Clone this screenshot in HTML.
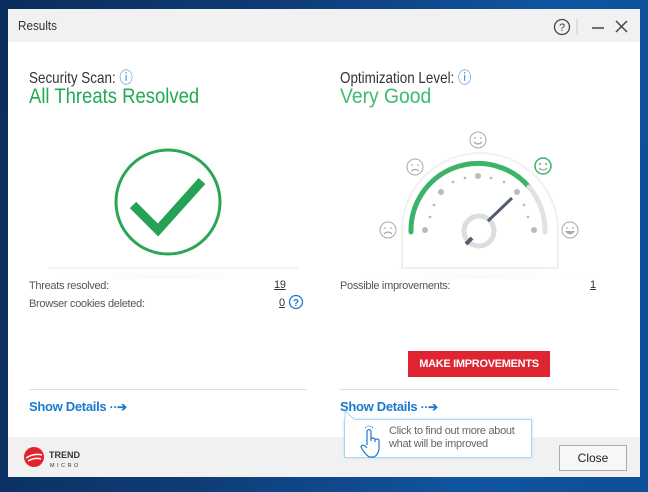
<!DOCTYPE html>
<html><head><meta charset="utf-8"><style>
body{margin:0;width:648px;height:492px;overflow:hidden;position:relative;font-family:"Liberation Sans",sans-serif;background:linear-gradient(100deg,#0b2d5c 0%,#0f3d78 40%,#1055a0 75%,#0d4f98 100%);}
.win{position:absolute;left:8px;top:9px;width:632px;height:468px;background:#fff;}
.title{position:absolute;left:0;top:0;width:632px;height:33px;background:#f1f1f1;}
.t{position:absolute;font-size:13px;color:#333;white-space:nowrap;transform-origin:0 0;}
.abs{position:absolute;}
.lbl{position:absolute;font-size:11px;color:#555;letter-spacing:-0.3px;}
.sep{position:absolute;height:1px;background:#ddd;}
.sd{position:absolute;font-size:13px;color:#1a7ad0;font-weight:bold;letter-spacing:-0.3px;}
.footer{position:absolute;left:0;top:428px;width:632px;height:40px;background:#f1f1f1;}
</style></head><body>
<div class="win">
<div class="title"></div>
<div class="t" style="left:10px;top:9px;font-size:13px;transform:scaleX(0.9)">Results</div>
<svg class="abs" style="left:545px;top:8px" width="85" height="20">
<circle cx="9" cy="10" r="7.5" fill="none" stroke="#444" stroke-width="1.3"/>
<text x="9" y="14" font-size="11" text-anchor="middle" fill="#444" font-family="Liberation Sans">?</text>
<line x1="24" y1="2" x2="24" y2="18" stroke="#ccc"/>
<line x1="39" y1="11" x2="51" y2="11" stroke="#444" stroke-width="1.5"/>
<path d="M63 4 L74 15 M74 4 L63 15" stroke="#444" stroke-width="1.5"/>
</svg>
<div class="t" style="left:21px;top:55px;font-size:16px;color:#333;transform:scaleX(0.84)">Security Scan: <span style="color:#1a7ad0">ⓘ</span></div>
<div class="t" style="left:21px;top:76px;font-size:21px;color:#22a954;transform:scaleX(0.88)">All Threats Resolved</div>
<div class="t" style="left:332px;top:55px;font-size:16px;color:#333;transform:scaleX(0.84)">Optimization Level: <span style="color:#1a7ad0">ⓘ</span></div>
<div class="t" style="left:332px;top:76px;font-size:21px;color:#3dbb6f;transform:scaleX(0.92)">Very Good</div>
<svg class="abs" style="left:0;top:100px" width="632" height="170">
<defs><radialGradient id="sh" cx="50%" cy="100%" r="60%"><stop offset="0" stop-color="#e4e4e4"/><stop offset="1" stop-color="#fff" stop-opacity="0"/></radialGradient></defs>
<ellipse cx="160" cy="159" rx="125" ry="28" fill="url(#sh)"/>
<line x1="40" y1="159" x2="290" y2="159" stroke="#e8e8e8"/>
<circle cx="160" cy="93" r="52" fill="none" stroke="#2aa654" stroke-width="3"/>
<path d="M125 96 L150 121 L194 72" fill="none" stroke="#26a257" stroke-width="9"/>
<ellipse cx="470" cy="159" rx="135" ry="30" fill="url(#sh)"/>
<path d="M394 159 L394 122 A78 78 0 0 1 550 122 L550 159 Z" fill="#fff" stroke="#f0f0f0" stroke-width="2"/>
<path d="M403 123 A67 67 0 0 1 521 78" fill="none" stroke="#3bb46a" stroke-width="5" stroke-linecap="round"/>
<path d="M521 78 A67 67 0 0 1 537 123" fill="none" stroke="#e2e2e2" stroke-width="5" stroke-linecap="round"/>
<g fill="#bbb"><circle cx="417" cy="121" r="3"/><circle cx="433" cy="83" r="3"/><circle cx="470" cy="67" r="3"/><circle cx="509" cy="83" r="3"/><circle cx="526" cy="121" r="3"/>
<circle cx="422" cy="108" r="1.4"/><circle cx="426" cy="96" r="1.4"/><circle cx="445" cy="73" r="1.4"/><circle cx="457" cy="69" r="1.4"/><circle cx="483" cy="69" r="1.4"/><circle cx="496" cy="73" r="1.4"/><circle cx="516" cy="96" r="1.4"/><circle cx="520" cy="108" r="1.4"/></g>
<circle cx="471" cy="122" r="15" fill="none" stroke="#ddd" stroke-width="5"/>
<line x1="480" y1="112" x2="504" y2="89" stroke="#4f5f70" stroke-width="3"/>
<line x1="458" y1="135" x2="464" y2="129" stroke="#4f5f70" stroke-width="4"/>
<g fill="none" stroke="#aaa" stroke-width="1"><circle cx="407" cy="58" r="8"/><circle cx="470" cy="31" r="8"/><circle cx="380" cy="121" r="8"/><circle cx="562" cy="121" r="8"/></g>
<circle cx="535" cy="57" r="8" fill="none" stroke="#3bb46a" stroke-width="1.5"/>
<path d="M403 62 Q407 59 411 62 M466 33 Q470 37 474 33 M531 59 Q535 63 539 59 M376 125 Q380 121 384 125" fill="none" stroke="#999"/>
<path d="M557 122 L567 122 Q562 129 557 122Z" fill="#aaa"/>
<g fill="#999"><circle cx="404" cy="56" r="0.8"/><circle cx="410" cy="56" r="0.8"/><circle cx="467" cy="29" r="0.8"/><circle cx="473" cy="29" r="0.8"/><circle cx="377" cy="119" r="0.8"/><circle cx="383" cy="119" r="0.8"/><circle cx="559" cy="119" r="0.8"/><circle cx="565" cy="119" r="0.8"/></g>
<g fill="#3bb46a"><circle cx="532" cy="55" r="1"/><circle cx="538" cy="55" r="1"/></g>
</svg>
<div class="lbl" style="left:21px;top:271px">Threats resolved:</div>
<div class="lbl" style="left:266px;top:270px;color:#333;text-decoration:underline">19</div>
<div class="lbl" style="left:21px;top:289px">Browser cookies deleted:</div>
<div class="lbl" style="left:271px;top:288px;color:#333;text-decoration:underline">0</div>
<svg class="abs" style="left:280px;top:285px" width="16" height="16"><circle cx="8" cy="8" r="6.5" fill="none" stroke="#1a7ad0" stroke-width="1.3"/><text x="8" y="12" font-size="10" text-anchor="middle" fill="#1a7ad0" font-family="Liberation Sans" font-weight="bold">?</text></svg>
<div class="lbl" style="left:332px;top:271px">Possible improvements:</div>
<div class="lbl" style="left:582px;top:270px;color:#333;text-decoration:underline">1</div>
<div class="abs" style="left:400px;top:342px;width:142px;height:26px;background:#df2532;color:#fff;font-size:11px;font-weight:bold;text-align:center;line-height:26px;letter-spacing:-0.3px">MAKE IMPROVEMENTS</div>
<div class="sep" style="left:21px;top:380px;width:278px"></div>
<div class="sep" style="left:332px;top:380px;width:279px"></div>
<div class="sd" style="left:21px;top:390px">Show Details <span style="font-size:12px">··➔</span></div>
<div class="footer"></div>
<div class="sd" style="left:332px;top:390px">Show Details <span style="font-size:12px">··➔</span></div>
<div class="abs" style="left:336px;top:410px;width:186px;height:37px;background:#fff;border:1px solid #a9d4f2;box-shadow:0 0 3px #bfe0f7"></div>
<svg class="abs" style="left:336px;top:402px" width="14" height="10"><path d="M1 0 L1 9 L11 9 Z" fill="#fff"/><path d="M1 0 L1 8 M1 0 L10 8" stroke="#a9d4f2"/></svg>
<svg class="abs" style="left:350px;top:416px" width="26" height="36"><path d="M9 20 V6 Q11 3 13 6 V16 M13 14 Q15 12 17 14 V17 M17 15 Q19 13 21 15 V24 Q20 30 16 32 L11 32 Q6 28 3 22 Q4 19 7 21 L9 23" fill="none" stroke="#1a7ad0" stroke-width="1.2"/><path d="M7 3 Q11 -1 15 3" fill="none" stroke="#1a7ad0" stroke-dasharray="1 1"/></svg>
<div class="abs" style="left:381px;top:416px;font-size:11px;color:#666;line-height:13px;letter-spacing:-0.3px">Click to find out more about<br>what will be improved</div>
<svg class="abs" style="left:14px;top:436px" width="70" height="26"><circle cx="12" cy="12" r="10" fill="#e0232c"/><path d="M4 13 Q12 8 20 10 M6 16 Q13 12 19 14" stroke="#fff" stroke-width="1.5" fill="none"/>
<text x="27" y="13" font-size="9" font-weight="bold" fill="#333" font-family="Liberation Sans">TREND</text><text x="28" y="22" font-size="5.5" fill="#333" font-family="Liberation Sans" letter-spacing="2.5">MICRO</text></svg>
<div class="abs" style="left:551px;top:436px;width:66px;height:24px;border:1px solid #aaa;background:#f7f7f7;font-size:12px;color:#222;text-align:center;line-height:24px">Close</div>
</div>
</body></html>
